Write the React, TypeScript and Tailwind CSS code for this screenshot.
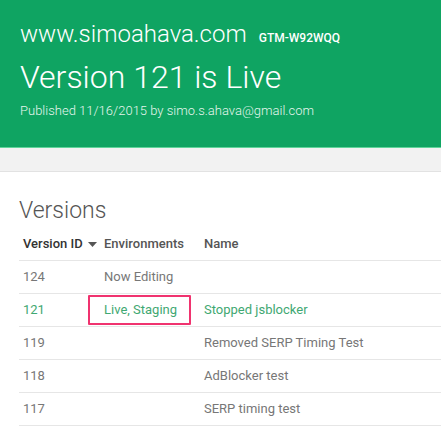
import React from 'react'

const rows = [
  { id: '124', env: 'Now Editing', name: '', live: false },
  { id: '121', env: 'Live, Staging', name: 'Stopped jsblocker', live: true },
  { id: '119', env: '', name: 'Removed SERP Timing Test', live: false },
  { id: '118', env: '', name: 'AdBlocker test', live: false },
  { id: '117', env: '', name: 'SERP timing test', live: false },
]

export default function App() {
  return (
    <div className="w-[441px] h-[431px] overflow-hidden bg-white font-['Roboto',sans-serif]">
      {/* Header */}
      <div className="h-[148px] bg-[#0fa462] border-b border-[#5fd59a] px-[20px] pt-[18px] text-white">
        <div className="flex items-baseline gap-[12px] h-[32px]">
          <span className="text-[24px] font-light leading-[32px] font-['Roboto_Light','Roboto',sans-serif]">
            www.simoahava.com
          </span>
          <span className="text-[12px] font-medium">GTM-W92WQQ</span>
        </div>
        <div className="text-[32px] font-light leading-[38px] mt-[8px] font-['Roboto_Light','Roboto',sans-serif]">
          Version 121 is Live
        </div>
        <div className="text-[13px] font-light leading-[18px] mt-[6px] text-[#e4f5ec] font-['Roboto_Light','Roboto',sans-serif]">
          Published 11/16/2015 by simo.s.ahava@gmail.com
        </div>
      </div>

      {/* Toolbar strip */}
      <div className="h-[24px] bg-[#f2f2f2] border-b border-[#e2e2e2]" />

      {/* Content */}
      <div className="pl-[19px] pt-[24px]">
        <h2 className="text-[23px] font-light text-[#555] leading-[30px] font-['Roboto_Light','Roboto',sans-serif]">
          Versions
        </h2>

        <div className="mt-[1px] text-[13px]">
          <div className="flex h-[34px] items-center border-b border-[#e6e6e6] font-medium">
            <div className="w-[81px] pl-[4px] text-[#333] flex items-center gap-[5px]">
              Version ID
              <svg width="9" height="5" viewBox="0 0 9 5" className="mt-[1px]">
                <path d="M0 0h9L4.5 5z" fill="#555" />
              </svg>
            </div>
            <div className="w-[100px] pl-[4px] text-[#555]">Environments</div>
            <div className="pl-[4px] text-[#555]">Name</div>
          </div>

          {rows.map((r) => (
            <div
              key={r.id}
              className={`relative flex h-[33px] items-center border-b border-[#e6e6e6] ${
                r.live ? 'text-[#3fa872]' : 'text-[#777]'
              }`}
            >
              <div className="w-[81px] pl-[4px]">{r.id}</div>
              <div className="w-[100px] pl-[4px]">{r.env}</div>
              <div className="pl-[4px]">{r.name}</div>
              {r.live && (
                <div className="absolute left-[69px] top-[1px] w-[103px] h-[30px] border-2 border-[#f0336f] rounded-[1px]" />
              )}
            </div>
          ))}
        </div>
      </div>
    </div>
  )
}
